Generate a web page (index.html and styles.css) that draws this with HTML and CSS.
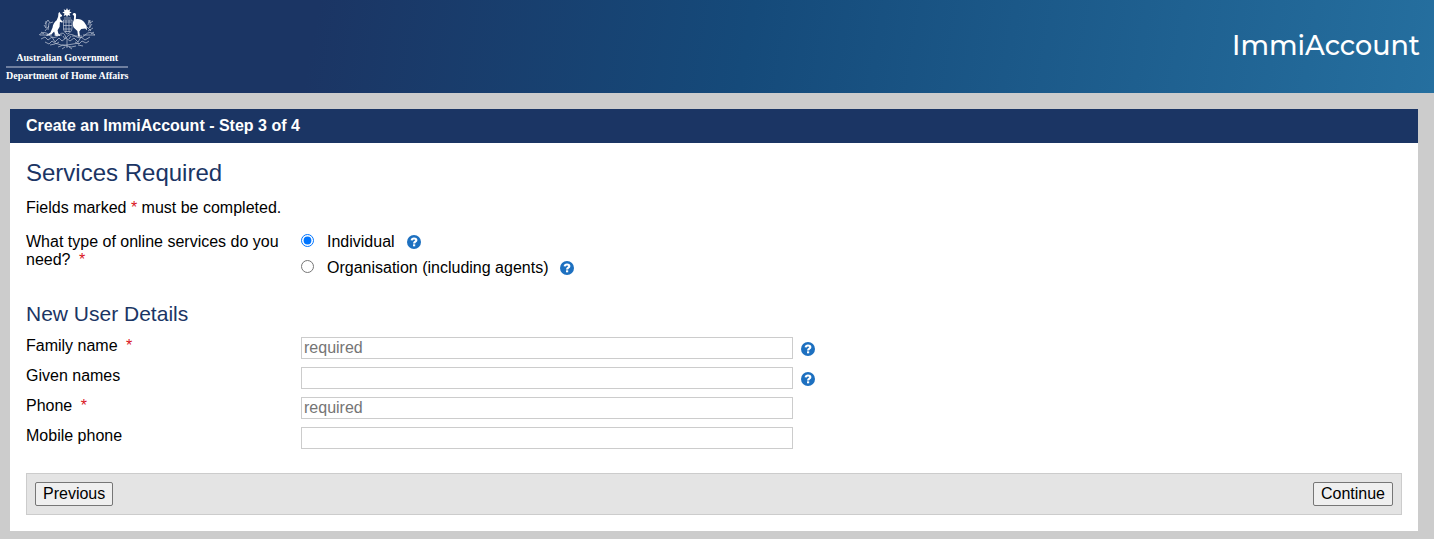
FILE: index.html
```html
<!DOCTYPE html>
<html lang="en">
<head>
    <meta charset="UTF-8">
    <meta name="viewport" content="width=device-width, initial-scale=1.0">
    <title>Create an ImmiAccount</title>
    <link rel="stylesheet" href="styles.css">
</head>
<body>
    <svg class="sprite" aria-hidden="true">
        <symbol id="help-icon" viewBox="0 0 14 14">
            <circle cx="7" cy="7" r="7" fill="#1d70c0"/>
            <path d="M4.700 5.400C4.900 4 5.800 3.500 7 3.500c1.400 0 2.300.7 2.300 1.700 0 1.500-2.200 1.400-2.200 3.200" fill="none" stroke="#fff" stroke-width="2.200"/>
            <rect x="6" y="9.300" width="2.200" height="2" fill="#fff"/>
        </symbol>
    </svg>

    <header class="header">
        <div class="logo">
            <svg class="crest" viewBox="0 0 60 42" role="img" aria-label="Coat of arms">
                <path class="solid" d="M30 0l1 2.200 2.300-.9-.8 2.300 2.200 1-2.200 1 .8 2.300-2.300-.8-1 2.200-1-2.200-2.300.8.8-2.300-2.200-1 2.200-1-.8-2.300 2.300.9z"/>
                <path class="solid" d="M21.500 5l1.200-1 .8 2 1.600 1.300-.3 1.200-1.700.4.400 2.500 2.300 2.200-.6 1.200-2.300-1-.3 5-2 3.500.7 3.300 1.700 1v1.400h-4.500l-1.400-4.500-2.500 2.700-5 1.800-.2-1 3.900-2.300 2.200-5c.4-3.500 2.200-6 4.200-7.500l1.400-3.500z"/>
                <path class="solid" d="M35.500 6.200c1-1.900 3.400-1.700 3.600.5l-.3 4.600c3-.7 6.200.2 8.300 2.700l2.600 3.900.2 4.300-1.700-1.800-4 .7-1.900 2.300.7 5.100h-1.900l-.7-5.500-2.700-2.600c-2-1.600-2.600-5-.9-8.500l.3-4z"/>
                <path class="line" d="M26.500 12h8.500v8c0 3-2 5-4.500 6-2.500-1-4-3-4-6zM26.500 17.500h8.500M29 12v12M32 12v12M27 10h7M27 14h7M26 21h8M28 23.500h5"/>
                <path class="line" d="M8 16l3-4 2 3 3-1M9 20l-2-3M8 23l4-5M9 13v7M12 15l-1 7M51 17l1-5 1 3 3-2M52 20l3-4M51 23l5-3M53 12v8M50 19l4 4"/>
                <path class="line" d="M2 27q5-5 10 0t10 0 7 3q4-6 9-2t10-1 10 0M3 27h12M17 27h8M35 28h10M46 27h12M4 24l3 2M57 24l-3 2"/>
                <path class="line" d="M4 31l4-2 3 3 4-3 3 5 4-4 3 3 4-3 4 3 4-3 4 4 3-5 4 3 5-3M8 34l4 2 3-3 4 3 3-2M38 34l4 2 3-3 4 2 3-2M13 37l5-1M41 37l5 1"/>
                <path class="line" d="M18 35q6 3 12 2t12-2M21 39q5-3 9-1t9 0M25 41l3-2M32 39l3 2M26 28l2 3M34 28l-2 3M30 31v9"/>
            </svg>
            <div class="government">Australian Government</div>
            <div class="department">Department of Home Affairs</div>
        </div>
        <div class="app-name">ImmiAccount</div>
    </header>

    <main class="container">
        <h1>Create an ImmiAccount - Step 3 of 4</h1>
        <form class="content">
            <h2>Services Required</h2>
            <p class="note">Fields marked <span class="required">*</span> must be completed.</p>

            <div class="row services" role="radiogroup" aria-labelledby="serviceType">
                <div class="label" id="serviceType">What type of online services do you need? <span class="required mark">*</span></div>
                <div class="options">
                    <div class="option">
                        <input type="radio" name="service" id="individual" checked>
                        <label for="individual">Individual</label>
                        <button type="button" class="help" aria-label="Help"><svg><use href="#help-icon"/></svg></button>
                    </div>
                    <div class="option">
                        <input type="radio" name="service" id="organisation">
                        <label for="organisation">Organisation (including agents)</label>
                        <button type="button" class="help" aria-label="Help"><svg><use href="#help-icon"/></svg></button>
                    </div>
                </div>
            </div>

            <h3>New User Details</h3>
            <div class="row">
                <label class="label" for="familyName">Family name <span class="required mark">*</span></label>
                <input class="text" type="text" id="familyName" placeholder="required">
                <button type="button" class="help" aria-label="Help"><svg><use href="#help-icon"/></svg></button>
            </div>
            <div class="row">
                <label class="label" for="givenNames">Given names</label>
                <input class="text" type="text" id="givenNames">
                <button type="button" class="help" aria-label="Help"><svg><use href="#help-icon"/></svg></button>
            </div>
            <div class="row">
                <label class="label" for="phone">Phone <span class="required mark">*</span></label>
                <input class="text" type="text" id="phone" placeholder="required">
            </div>
            <div class="row">
                <label class="label" for="mobile">Mobile phone</label>
                <input class="text" type="text" id="mobile">
            </div>

            <div class="buttons">
                <button type="button" class="btn">Previous</button>
                <button type="submit" class="btn">Continue</button>
            </div>
        </form>
    </main>
</body>
</html>
```
FILE: styles.css
```css
* {
    box-sizing: border-box;
}
body {
    margin: 0;
    background-color: #ccc;
    font-family: Helvetica, "Liberation Sans", Arial, sans-serif;
    font-size: 16px;
    line-height: 18px;
    color: #000;
}
.sprite {
    display: none;
}
.header {
    display: flex;
    justify-content: space-between;
    align-items: center;
    padding: 8px 14px 9px 6px;
    background: linear-gradient(100deg, #1b3564 0%, #1b3564 22%, #154a7a 52%, #256f9f 100%);
    color: #fff;
}
.logo {
    display: flex;
    flex-direction: column;
    align-items: center;
    font-family: "Liberation Serif", "Times New Roman", serif;
    font-weight: bold;
    text-align: center;
    white-space: nowrap;
}
.crest {
    display: block;
    width: 60px;
    height: 42px;
}
.crest .solid {
    fill: #fff;
}
.crest .line {
    fill: none;
    stroke: #c3cbd9;
    stroke-width: 1;
    opacity: 0.7;
}
.government {
    width: 100%;
    border-bottom: 2px solid #6f7fa0;
    font-size: 10px;
    line-height: 16px;
}
.department {
    font-size: 10px;
    line-height: 16px;
}
.app-name {
    font-family: Montserrat, Inter, sans-serif;
    font-size: 27px;
    font-weight: 500;
    line-height: 36px;
}
.container {
    margin: 16px 16px 8px 10px;
    background-color: #fff;
}
h1 {
    margin: 0;
    padding: 8px 16px;
    background-color: #1b3564;
    color: #fff;
    font-size: 16px;
    font-weight: bold;
}
.content {
    padding: 16px;
}
h2,
h3 {
    margin: 0;
    color: #1b3564;
    font-weight: normal;
}
h2 {
    font-size: 24px;
    line-height: 28px;
}
h3 {
    margin: 16px 0 10px;
    font-size: 21px;
    line-height: 26px;
}
.note {
    margin: 12px 0 16px;
}
.required {
    color: #d9141e;
}
.mark {
    margin-left: 4px;
}
.row {
    display: flex;
    margin-bottom: 8px;
}
.label {
    width: 275px;
    padding-right: 16px;
}
.option {
    display: flex;
    align-items: center;
    margin-bottom: 8px;
}
.option input {
    width: 13px;
    height: 13px;
    margin: 0 13px 3px 0;
}
.option .help {
    margin: 0 0 1px 12px;
}
.help {
    width: 14px;
    height: 14px;
    padding: 0;
    border: none;
    background: none;
    cursor: pointer;
}
.help svg {
    display: block;
    width: 14px;
    height: 14px;
}
.row > .help {
    align-self: center;
    margin: 2px 0 0 8px;
}
.text {
    flex: 0 1 492px;
    min-width: 0;
    height: 22px;
    padding: 0 2px;
    border: 1px solid #ccc;
    background-color: #fff;
    font: inherit;
}
.text::placeholder {
    color: #757575;
}
.buttons {
    display: flex;
    justify-content: space-between;
    margin-top: 24px;
    padding: 8px;
    border: 1px solid #ccc;
    background-color: #e4e4e4;
}
.btn {
    height: 24px;
    padding: 0 7px;
    border: 1px solid #767676;
    border-radius: 2px;
    background-color: #efefef;
    color: #000;
    font: inherit;
    cursor: pointer;
}
.btn:hover {
    background-color: #e5e5e5;
}
```
